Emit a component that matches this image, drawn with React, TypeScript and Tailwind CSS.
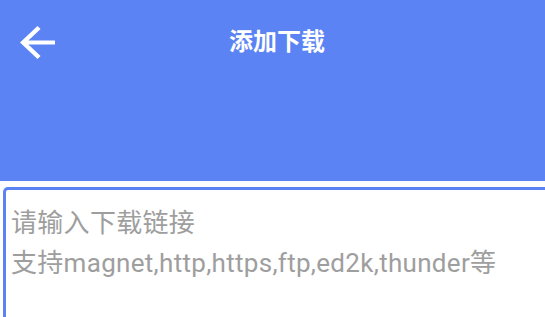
import { useState } from 'react';

const FONT = "font-['Roboto','Noto_Sans_CJK_SC',sans-serif]";

function BackArrow() {
  // material arrow_back, cropped to its drawn area
  return (
    <svg width="35" height="33" viewBox="4 4 16 16" preserveAspectRatio="none" fill="white">
      <path d="M20 11H7.83l5.59-5.59L12 4l-8 8 8 8 1.41-1.41L7.83 13H20v-2z" />
    </svg>
  );
}

export default function App() {
  const [link, setLink] = useState('');

  return (
    <div className={`w-[545px] h-[317px] overflow-hidden bg-white ${FONT}`}>
      {/* Header */}
      <div className="h-[181px] bg-[#5b83f3]">
        <div className="h-[84px] grid grid-cols-[1fr_auto_1fr] items-center">
          <button className="justify-self-start ml-[20px] flex items-center">
            <BackArrow />
          </button>
          <h1 className="ml-[9px] text-[24px] font-bold text-white leading-none">添加下载</h1>
          <div />
        </div>
      </div>

      {/* Link input */}
      <div className="mt-[6px] ml-[3px] w-[600px] h-[200px] border-[3px] border-[#5b83f3] rounded-[5px] pl-[5px] pt-[13px]">
        <textarea
          value={link}
          onChange={(e) => setLink(e.target.value)}
          placeholder={'请输入下载链接\n支持magnet,http,https,ftp,ed2k,thunder等'}
          className="w-full h-full resize-none outline-none text-[26px] leading-[40px] tracking-[0.3px] text-[#333] placeholder:text-[#9e9e9e] bg-transparent"
        />
      </div>
    </div>
  );
}
